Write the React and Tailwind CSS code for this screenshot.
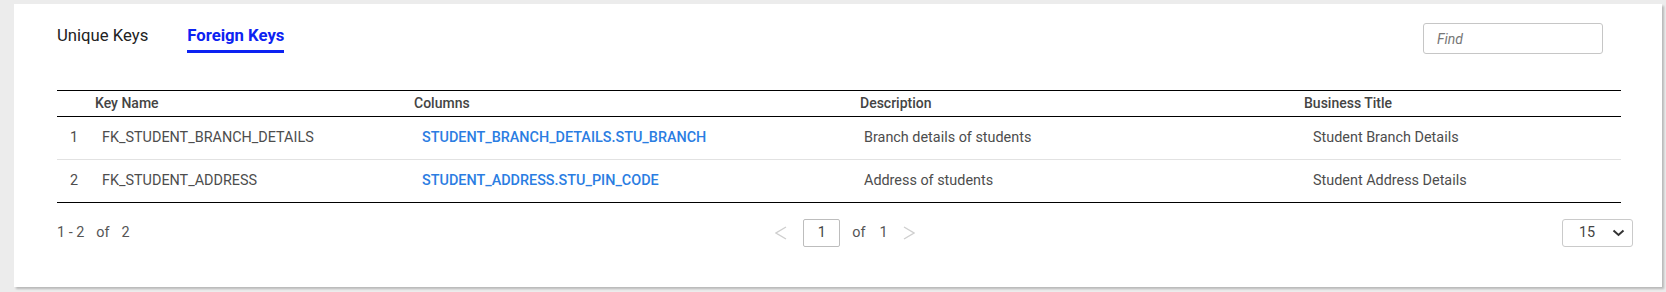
const rows = [
  {
    key: 'FK_STUDENT_BRANCH_DETAILS',
    column: 'STUDENT_BRANCH_DETAILS.STU_BRANCH',
    description: 'Branch details of students',
    title: 'Student Branch Details',
  },
  {
    key: 'FK_STUDENT_ADDRESS',
    column: 'STUDENT_ADDRESS.STU_PIN_CODE',
    description: 'Address of students',
    title: 'Student Address Details',
  },
]

const Chevron = ({ dir }) => (
  <svg width="12" height="14" viewBox="0 0 12 14" fill="none">
    <polyline
      points={dir === 'left' ? '11,1 1,7 11,13' : '1,1 11,7 1,13'}
      stroke="#cfcfcf"
      strokeWidth="1.4"
    />
  </svg>
)

const App = () => {
  return (
    <div className="min-h-screen bg-[#ececec] pt-[4px] pl-[14px] font-['Roboto',sans-serif]">
      <div className="w-[1648px] h-[283px] bg-white shadow-[2px_2px_2px_rgba(0,0,0,0.22)]">

        {/* ── Tabs + search ─────────────────────────── */}
        <div className="flex items-start justify-between pt-[19px] pl-[43px] pr-[59px]">
          <div className="flex gap-[39px] mt-[3px]">
            <button className="text-[16.7px] leading-[20px] text-[#222] pb-[4px] border-b-[3px] border-transparent">
              Unique Keys
            </button>
            <button className="text-[16.7px] leading-[20px] font-bold text-[#0c22f2] pb-[4px] border-b-[3px] border-[#0c22f2]">
              Foreign Keys
            </button>
          </div>
          <input
            placeholder="Find"
            className="w-[180px] h-[31px] border border-[#c6c6c6] rounded-[3px] px-[13px] text-[14px] italic placeholder:text-[#777] outline-none"
          />
        </div>

        {/* ── Table ─────────────────────────────────── */}
        <div className="ml-[43px] mt-[36px] w-[1564px] text-[14.4px]">
          <div className="grid grid-cols-[38px_319px_446px_444px_317px] h-[27px] items-center border-y border-black text-[14px] font-medium text-[#444]">
            <span />
            <span>Key Name</span>
            <span>Columns</span>
            <span>Description</span>
            <span>Business Title</span>
          </div>
          {rows.map((row, i) => (
            <div
              key={row.key}
              className={`grid grid-cols-[38px_319px_446px_444px_317px] h-[43px] items-center text-[#4d4d4d] border-b ${
                i === rows.length - 1 ? 'border-black' : 'border-[#e2e2e2]'
              }`}
            >
              <span className="pl-[13px]">{i + 1}</span>
              <span className="pl-[7px]">{row.key}</span>
              <span className="pl-[8px] font-medium text-[#2b7de2]">{row.column}</span>
              <span className="pl-[4px]">{row.description}</span>
              <span className="pl-[9px]">{row.title}</span>
            </div>
          ))}
        </div>

        {/* ── Footer / pagination ───────────────────── */}
        <div className="ml-[43px] mt-[16px] w-[1576px] h-[28px] grid grid-cols-3 items-center text-[14.4px] text-[#555]">
          <div className="flex items-center gap-[12px]">
            <span>1 - 2</span>
            <span>of</span>
            <span>2</span>
          </div>
          <div className="flex items-center justify-center">
            <Chevron dir="left" />
            <div className="ml-[16px] w-[37px] h-[28px] border border-[#bdbdbd] rounded-[2px] flex items-center justify-center text-[#444]">
              1
            </div>
            <span className="ml-[12px]">of</span>
            <span className="ml-[14px]">1</span>
            <span className="ml-[15px] flex">
              <Chevron dir="right" />
            </span>
          </div>
          <div className="flex justify-end">
            <div className="w-[71px] h-[28px] border border-[#cacaca] rounded-[3px] flex items-center pl-[16px] pr-[7px] justify-between text-[#444]">
              <span>15</span>
              <svg width="13" height="8" viewBox="0 0 13 8" fill="none">
                <polyline points="1.5,1.5 6.5,6 11.5,1.5" stroke="#333" strokeWidth="2" />
              </svg>
            </div>
          </div>
        </div>
      </div>
    </div>
  )
}

export default App
